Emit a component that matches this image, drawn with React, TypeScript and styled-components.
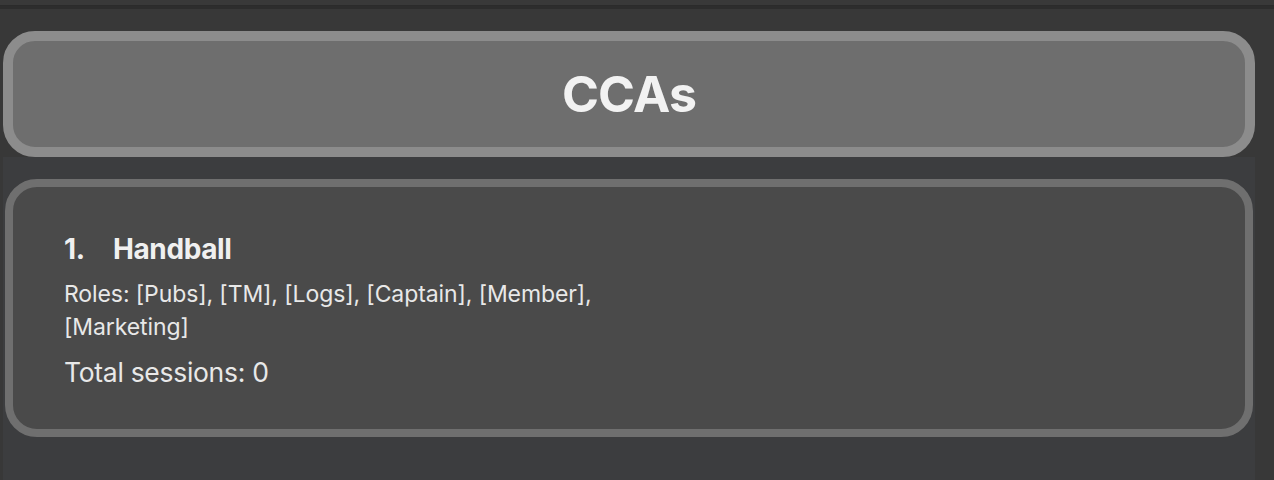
import React from "react";
import styled, { createGlobalStyle } from "styled-components";

const GlobalStyle = createGlobalStyle`
  html, body { margin: 0; padding: 0; background: #383838; }
  body { font-family: Inter, "Noto Sans", sans-serif; overflow: hidden; }
`;

const Page = styled.div`
  width: 1274px;
  height: 480px;
  display: flex;
  flex-direction: column;
  background: #383838;
`;

const TopStrip = styled.div`
  height: 5px;
  background: #393939;
  border-bottom: 1px solid #2b2b2b;
  box-shadow: 0 3px 0 0 #2d2d2d;
  margin-bottom: 25px;
`;

const Column = styled.div`
  width: 1252px;
  margin-left: 3px;
  display: flex;
  flex-direction: column;
  flex: 1;
`;

const Header = styled.div`
  height: 106px;
  border: 10px solid #8c8c8c;
  border-radius: 32px;
  background: #6e6e6e;
  display: flex;
  align-items: center;
  justify-content: center;
`;

const Title = styled.h1`
  margin: 0;
  font-family: Inter, sans-serif;
  font-weight: 700;
  font-size: 50px;
  color: #f2f2f2;
  letter-spacing: -0.8px;
`;

const List = styled.div`
  flex: 1;
  background: #3c3d3f;
  padding: 22px 2px 0;
`;

const Card = styled.div`
  box-sizing: border-box;
  height: 258px;
  border: 8px solid #6f6f6f;
  border-radius: 32px;
  background: #4a4a4a;
  padding: 45px 51px 0;
  color: #e8e8e8;
`;

const Name = styled.div`
  display: flex;
  font-weight: 700;
  font-size: 28px;
  color: #f0f0f0;
  letter-spacing: -0.4px;
  line-height: 34px;
`;

const Index = styled.span`
  width: 49px;
`;

const Roles = styled.div`
  margin-top: 12px;
  width: 580px;
  font-size: 23px;
  line-height: 33px;
  letter-spacing: -0.1px;
`;

const Sessions = styled.div`
  margin-top: 11px;
  font-size: 26.5px;
  line-height: 34px;
  letter-spacing: -0.3px;
`;

export default function App() {
  return (
    <Page>
      <GlobalStyle />
      <TopStrip />
      <Column>
        <Header>
          <Title>CCAs</Title>
        </Header>
        <List>
          <Card>
            <Name>
              <Index>1.</Index>
              <span>Handball</span>
            </Name>
            <Roles>Roles: [Pubs], [TM], [Logs], [Captain], [Member], [Marketing]</Roles>
            <Sessions>Total sessions: 0</Sessions>
          </Card>
        </List>
      </Column>
    </Page>
  );
}
